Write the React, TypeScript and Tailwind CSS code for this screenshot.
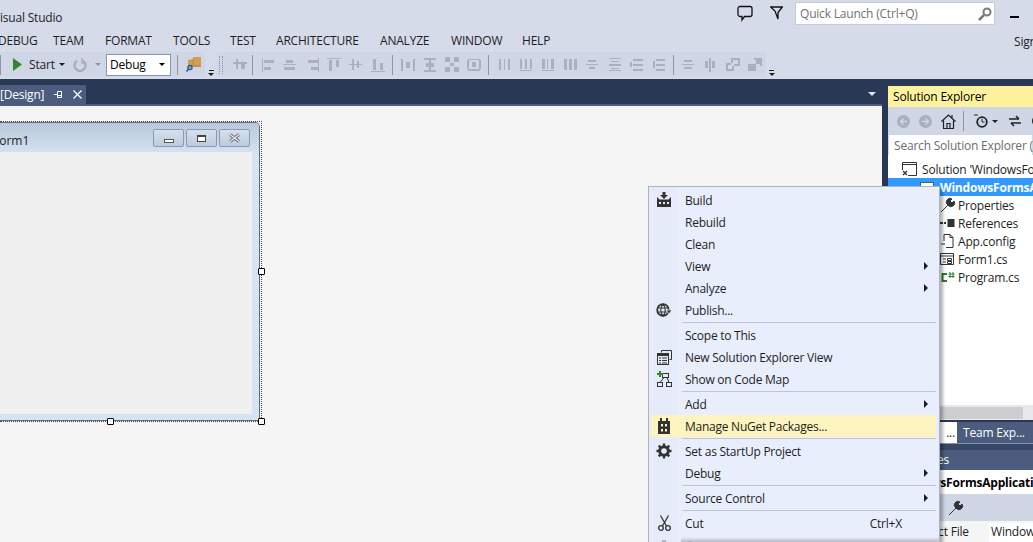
const menus = [
  { label: 'DEBUG', cls: 'w-[55px] -ml-[2px]' },
  { label: 'TEAM', cls: 'w-[52px]' },
  { label: 'FORMAT', cls: 'w-[68px]' },
  { label: 'TOOLS', cls: 'w-[57px]' },
  { label: 'TEST', cls: 'w-[46px]' },
  { label: 'ARCHITECTURE', cls: 'w-[104px]' },
  { label: 'ANALYZE', cls: 'w-[71px]' },
  { label: 'WINDOW', cls: 'w-[71px]' },
  { label: 'HELP', cls: 'w-[492px]' },
]

type Box = [number, number, number, number]

// designer alignment buttons, all greyed out
const alignGroups: Box[][][] = [
  [
    [[1, 1, 1, 14], [3, 3, 10, 3], [3, 10, 7, 3]],
    [[0, 7, 13, 1], [3, 3, 7, 3], [1, 10, 11, 3]],
    [[13, 1, 1, 14], [3, 3, 10, 3], [6, 10, 7, 3]],
    [[0, 1, 14, 1], [2, 3, 3, 11], [9, 3, 3, 7]],
    [[0, 7, 13, 1], [3, 2, 2, 11], [8, 4, 2, 7]],
    [[0, 14, 14, 1], [2, 2, 3, 11], [9, 6, 3, 7]],
  ],
  [
    [[0, 2, 2, 12], [12, 2, 2, 12], [5, 5, 4, 6]],
    [[1, 1, 12, 2], [1, 13, 12, 2], [6, 3, 2, 10], [3, 6, 8, 4]],
    [[0, 0, 5, 5], [9, 0, 5, 5], [0, 10, 5, 5], [9, 10, 5, 5], [5, 6, 4, 3]],
    [[1, 2, 12, 1], [0, 3, 2, 9], [12, 3, 2, 9], [1, 12, 12, 2], [5, 5, 4, 5]],
  ],
  [
    [[1, 2, 2, 11], [6, 2, 1, 11], [10, 2, 2, 11]],
    [[0, 2, 2, 10], [5, 2, 2, 10], [10, 2, 2, 10], [0, 13, 12, 1]],
    [[0, 2, 3, 10], [5, 2, 1, 10], [9, 2, 3, 10], [0, 13, 12, 1]],
    [[0, 2, 3, 11], [5, 2, 3, 11], [10, 2, 3, 11]],
    [[0, 7, 12, 1], [2, 3, 8, 2], [3, 10, 6, 2]],
    [[1, 1, 12, 1], [1, 7, 12, 2], [1, 13, 12, 1], [3, 4, 8, 1], [3, 11, 8, 1]],
    [[3, 2, 10, 2], [3, 7, 10, 2], [3, 12, 10, 2], [0, 5, 2, 5]],
    [[4, 2, 9, 2], [4, 7, 9, 2], [4, 12, 9, 2], [1, 4, 2, 7]],
  ],
  [
    [[0, 7, 12, 1], [2, 3, 8, 2], [2, 10, 8, 2]],
    [[5, 1, 2, 14], [1, 4, 3, 7], [8, 4, 3, 7]],
    [[0, 6, 2, 8], [0, 12, 8, 2], [6, 9, 2, 5], [0, 6, 5, 2], [5, 1, 9, 2], [12, 1, 2, 8], [5, 1, 2, 5], [8, 7, 6, 2]],
    [[0, 7, 8, 7], [6, 1, 8, 2], [12, 1, 2, 8], [8, 3, 4, 4]],
  ],
]

function AlignIcon({ boxes }: { boxes: Box[] }) {
  return (
    <div className="w-[22px] flex items-center justify-center">
      <svg width="14" height="16" viewBox="0 0 14 16" fill="#aab0bd">
        {boxes.map((b, i) => (
          <rect key={i} x={b[0]} y={b[1]} width={b[2]} height={b[3]} />
        ))}
      </svg>
    </div>
  )
}

function Caret({ className }: { className: string }) {
  return <div className={`w-0 h-0 border-x-[3px] border-x-transparent border-t-[3px] ${className}`} />
}

function Overflow() {
  return (
    <div className="flex flex-col items-center gap-[2px]">
      <div className="w-[5px] h-px bg-[#1e1e1e]" />
      <Caret className="border-t-[#1e1e1e]" />
    </div>
  )
}

function BuildIcon() {
  return (
    <svg width="16" height="16" viewBox="0 0 16 16" fill="#333">
      <path d="M6.500 0h3v3h2.500L8 7 4 3h2.500z" />
      <path d="M1 5l2.500 2.500h9L15 5v10H1zM3 10v2h2v-2zm4 0v2h2v-2zm4 0v2h2v-2z" fillRule="evenodd" />
    </svg>
  )
}

function GlobeIcon() {
  return (
    <svg width="16" height="16" viewBox="0 0 16 16" fill="none" stroke="#333" strokeWidth="1.800">
      <circle cx="7" cy="8" r="5.800" />
      <path d="M1.500 6h11M1.500 10h11M7 2c-3 3-3 9 0 12M7 2c3 3 3 9 0 12" strokeWidth="1.100" />
      <path d="M10 8h6l-3 4z" fill="#333" stroke="#e5ebf9" strokeWidth="0.800" />
    </svg>
  )
}

function NewViewIcon() {
  return (
    <svg width="15" height="15" viewBox="0 0 15 15" fill="none" stroke="#333">
      <path d="M4.500 2.500V.5h10v9h-2" />
      <rect x="0.500" y="3.500" width="11" height="11" fill="#e5ebf9" />
      <path d="M0.500 5h11" strokeWidth="2" />
      <path d="M2 8h2M5 8h5M2 10.500h2M5 10.500h5M2 13h2M5 13h5" />
    </svg>
  )
}

function CodeMapIcon() {
  return (
    <svg width="15" height="16" viewBox="0 0 15 16" fill="none" stroke="#333">
      <rect x="5.500" y="2.500" width="6" height="4" />
      <rect x="0.500" y="11.500" width="5" height="4" />
      <rect x="9.500" y="11.500" width="5" height="4" />
      <path d="M7 6.500l-4 5M10 6.500l2 5" />
      <path d="M3 0v6M0 3h6" stroke="#2f8a2f" strokeWidth="2" />
    </svg>
  )
}

function NugetIcon() {
  return (
    <svg width="12" height="16" viewBox="0 0 12 16" fill="#333">
      <path d="M2 0h2v3h4V0h2v3h2v13H0V3h2zM3 6v2.500h2V6zm4 0v2.500h2V6zm-4 5v2.500h2V11zm4 0v2.500h2V11z" fillRule="evenodd" />
    </svg>
  )
}

function GearIcon() {
  return (
    <svg width="16" height="16" viewBox="0 0 16 16" fill="none" stroke="#333">
      <circle cx="8" cy="8" r="4.300" strokeWidth="3" />
      <path d="M8 0.500v3M8 12.500v3M0.500 8h3M12.500 8h3M2.700 2.700l2.100 2.100M11.200 11.200l2.100 2.100M2.700 13.300l2.100-2.100M11.200 4.800l2.100-2.100" strokeWidth="2.400" />
    </svg>
  )
}

function CutIcon() {
  return (
    <svg width="13" height="16" viewBox="0 0 13 16" fill="none" stroke="#333" strokeWidth="1.300">
      <path d="M2.500 0.500l6 10.500M10.500 0.500l-6 10.500" />
      <circle cx="3" cy="13" r="2.300" />
      <circle cx="10" cy="13" r="2.300" />
    </svg>
  )
}

function CopyIcon() {
  return (
    <svg width="14" height="10" viewBox="0 0 14 10" fill="#b4b9c6">
      <path d="M5 0h4v2h2v8H3V2h2z" />
    </svg>
  )
}

function WrenchIcon() {
  return (
    <svg width="16" height="16" viewBox="0 0 16 16" fill="#333" stroke="#333">
      <path d="M1 15l7-7a3.500 3.500 0 0 1 4-6l-2 2 2 2 2-2a3.500 3.500 0 0 1-6 4" />
    </svg>
  )
}

function MenuRow({ label, icon, sub, hot, shortcut }: { label: string; icon?: React.ReactNode; sub?: boolean; hot?: boolean; shortcut?: string }) {
  return (
    <div className={`h-[22px] flex items-center mx-[2px] mr-[3px] ${hot ? 'bg-[#fdf4bf]' : ''}`}>
      <div className="w-[28px] flex justify-center items-center pr-[2px]">{icon}</div>
      <div className="pl-[6px] pt-[1px] flex-1 text-[#1e1e1e] whitespace-nowrap tracking-[-0.25px]">{label}</div>
      {shortcut && <div className="mr-[34px] pt-[1px] text-[#1e1e1e]">{shortcut}</div>}
      {sub && <div className="mr-[8px] w-0 h-0 border-y-[4px] border-y-transparent border-l-[4px] border-l-[#1e1e1e]" />}
    </div>
  )
}

function MenuSep() {
  return <div className="h-[3px] flex items-center ml-[33px] mr-[3px]"><div className="h-px w-full bg-[#bdc4d5]" /></div>
}

function WinButton({ children }: { children: React.ReactNode }) {
  return (
    <div className="w-[31px] h-[18px] rounded-[2px] border border-[#8a9ab3] bg-[linear-gradient(to_bottom,#d5e0ec,#bccbdc)] flex items-center justify-center">
      {children}
    </div>
  )
}

function Handle({ className }: { className: string }) {
  return <div className={`absolute w-[7px] h-[7px] rounded-[1px] bg-white border border-black ${className}`} />
}

function TreeRow({ icon, label, cls, iconCls }: { icon: React.ReactNode; label: string; cls: string; iconCls: string }) {
  return (
    <div className={`h-[18px] flex items-center whitespace-nowrap ${cls}`}>
      <div className={`shrink-0 flex items-center ${iconCls}`}>{icon}</div>
      <span className="pt-[1px]">{label}</span>
    </div>
  )
}

function NavCircle({ dir, cls }: { dir: 'l' | 'r'; cls: string }) {
  return (
    <svg className={`shrink-0 ${cls}`} width="13" height="13" viewBox="0 0 13 13">
      <circle cx="6.500" cy="6.500" r="6.500" fill="#a9afbc" />
      <path d={dir === 'l' ? 'M10 6.500H4M6.500 3.500l-3 3 3 3' : 'M3 6.500h6M6.500 3.500l3 3-3 3'} fill="none" stroke="#cfd6e5" strokeWidth="1.400" />
    </svg>
  )
}

export default function App() {
  return (
    <div className="relative w-[1033px] h-[542px] overflow-hidden bg-[#d6dbe9] text-[12px] leading-none text-[#1e1e1e] font-['Open_Sans','Noto_Sans',sans-serif] tracking-[-0.2px]">
      {/* title bar */}
      <div className="h-[30px] flex">
        <div className="-ml-[7px] pt-[12px] w-[744px] whitespace-nowrap">Visual Studio</div>
        <div className="w-[33px] pt-[5px]">
          <svg width="16" height="17" viewBox="0 0 16 17" fill="none" stroke="#111" strokeWidth="1.300">
            <path d="M3 1.500h10a2 2 0 0 1 2 2v6a2 2 0 0 1-2 2H7.500L5 15v-3.500H3a2 2 0 0 1-2-2v-6a2 2 0 0 1 2-2z" />
          </svg>
        </div>
        <div className="w-[25px] pt-[6px]">
          <svg width="13" height="14" viewBox="0 0 13 14" fill="none" stroke="#111" strokeWidth="1.300">
            <path d="M0.700 1h11.600L8 6.500V13L5 5z" />
          </svg>
        </div>
        <div className="mt-[2px] w-[200px] h-[23px] bg-white border border-[#c3cadb] flex items-center justify-between pl-[4px] pr-[2px] text-[#717171]">
          <span>Quick Launch (Ctrl+Q)</span>
          <svg width="14" height="14" viewBox="0 0 14 14" fill="none" stroke="#7a7a7a" strokeWidth="2">
            <circle cx="9" cy="5" r="3.500" />
            <path d="M6 8l-5 5" strokeWidth="2.500" />
          </svg>
        </div>
        <div className="ml-[15px] mt-[16px] w-[9px] h-[2px] bg-black" />
      </div>

      {/* menu bar */}
      <div className="h-[22px] flex items-center whitespace-nowrap overflow-hidden">
        {menus.map((m) => (
          <div key={m.label} className={`shrink-0 ${m.cls}`}>{m.label}</div>
        ))}
        <div className="shrink-0 pt-[2px]">Sign in</div>
      </div>

      {/* toolbars */}
      <div className="h-[25px] flex">
        <div className="w-[205px] shrink-0 bg-[#cfd6e5] flex items-center">
          <div className="w-px h-[20px] bg-[#8d95a6]" />
          <svg className="ml-[12px]" width="9" height="13" viewBox="0 0 9 13" fill="#36862f">
            <path d="M0 0l9 6.500L0 13z" />
          </svg>
          <span className="ml-[7px] w-[30px]">Start</span>
          <Caret className="border-t-[#1e1e1e]" />
          <svg className="ml-[8px]" width="14" height="14" viewBox="0 0 14 14" fill="none" stroke="#a9afbc" strokeWidth="2.400">
            <path d="M10 2.800A5.500 5.500 0 1 1 4 2.800" />
            <path d="M9 0v5h4" strokeWidth="1.500" />
          </svg>
          <Caret className="ml-[8px] border-t-[#8d95a6]" />
          <div className="ml-[5px] w-[65px] h-[22px] bg-white border border-[#8d95a6] flex items-center justify-between pl-[3px] pr-[5px] text-black">
            <span>Debug</span>
            <Caret className="border-t-black" />
          </div>
          <div className="ml-[6px] w-px h-[20px] bg-[#8d95a6]" />
          <svg className="ml-[8px]" width="15" height="15" viewBox="0 0 15 15">
            <path d="M2 3l5-1V0h8v10H5v1H2z" fill="#d39b58" />
            <path d="M7 2v7h8" stroke="#b98344" fill="none" />
            <circle cx="4" cy="10.500" r="2" fill="none" stroke="#1f5e9c" strokeWidth="1.400" />
            <path d="M2.500 12l-2 2.500" stroke="#1f5e9c" strokeWidth="1.600" />
          </svg>
        </div>
        <div className="w-[12px] shrink-0 flex justify-center items-end pb-[1px]"><Overflow /></div>
        <div className="w-[549px] shrink-0 bg-[#cfd6e5] flex items-center">
          <div className="ml-[2px] w-[4px] h-[18px] border-x border-dotted border-[#8d95a6]" />
          <div className="ml-[6px]">
            <AlignIcon boxes={[[0, 5, 14, 2], [3, 2, 2, 10], [8, 7, 4, 5]]} />
          </div>
          {alignGroups.map((group, g) => (
            <div key={g} className="flex items-center">
              <div className={`w-px h-[20px] bg-[#8d95a6] ml-[1px] ${g === 2 ? 'mr-[5px]' : 'mr-[4px]'} ${g > 0 ? 'ml-[3px]' : ''}`} />
              {group.map((b, i) => <AlignIcon key={i} boxes={b} />)}
            </div>
          ))}
        </div>
        <div className="w-[11px] shrink-0 flex justify-center items-end pb-[1px]"><Overflow /></div>
      </div>
      <div className="h-[2px]" />

      {/* workspace */}
      <div className="h-[463px] flex bg-[#293955]">
        <div className="w-[882px] shrink-0 flex flex-col">
          <div className="h-[25px] flex items-end justify-between shrink-0 pr-[6px]">
            <div className="w-[86px] h-[19px] bg-[#4b5c7e] text-white flex items-center whitespace-nowrap">
              <span className="w-[53px] pt-[1px]">[Design]</span>
              <svg width="9" height="9" viewBox="0 0 9 9" fill="none" stroke="#fff" className="ml-[1px]">
                <path d="M0 4.500h3M3.500 1.500v6h4v-6zM3.500 5.500h4" />
              </svg>
              <svg width="9" height="9" viewBox="0 0 9 9" fill="none" stroke="#fff" strokeWidth="1.300" className="ml-[10px]">
                <path d="M0.500 0.500l8 8M8.500 0.500l-8 8" />
              </svg>
            </div>
            <Caret className="mb-[8px] border-x-[4px] border-t-[4px] border-t-[#dfe3ec]" />
          </div>
          <div className="h-[2px] bg-[#4b5c7e] shrink-0" />
          <div className="flex-1 bg-[#f5f5f5] pt-[15px]">
            <div className="relative w-[262px] h-[301px] border-t border-r border-b border-dotted border-[#444]">
              <div className="w-[260px] h-[299px] border-t border-r border-b border-[#5f6b80] rounded-tr-[5px] overflow-hidden bg-[#d6e4f2] flex flex-col">
                <div className="h-[29px] shrink-0 bg-[linear-gradient(to_bottom,#b9c9da,#d3e1f0)] flex items-center pr-[9px]">
                  <span className="-ml-[7px] mt-[7px] flex-1 text-[#222] tracking-normal">Form1</span>
                  <div className="flex gap-[2px] mt-[1px]">
                    <WinButton><div className="w-[10px] h-[4px] mt-[5px] border border-[#555] bg-white" /></WinButton>
                    <WinButton><div className="w-[9px] h-[7px] border border-[#444] border-t-2 bg-white" /></WinButton>
                    <WinButton>
                      <svg width="13" height="10" viewBox="0 0 13 10">
                        <path d="M2 1.500l9 7M11 1.500l-9 7" stroke="#667" strokeWidth="3" />
                        <path d="M2 1.500l9 7M11 1.500l-9 7" stroke="#eef1f5" strokeWidth="1.200" />
                      </svg>
                    </WinButton>
                  </div>
                </div>
                <div className="w-[252px] h-[262px] bg-[#f0f0f0]" />
              </div>
              <Handle className="-right-[4px] top-[146px]" />
              <Handle className="left-[107px] -bottom-[4px]" />
              <Handle className="-right-[4px] -bottom-[4px]" />
            </div>
          </div>
        </div>

        {/* solution explorer */}
        <div className="ml-[6px] mt-[7px] flex-1 min-w-0 flex flex-col overflow-hidden">
          <div className="h-[21px] shrink-0 bg-[#fff29d] flex items-center pl-[5px] whitespace-nowrap text-black">Solution Explorer</div>
          <div className="h-[28px] shrink-0 bg-[#cfd6e5] flex items-center pl-[9px]">
            <NavCircle dir="l" cls="" />
            <NavCircle dir="r" cls="ml-[9px]" />
            <svg className="ml-[9px] shrink-0" width="15" height="15" viewBox="0 0 15 15" fill="none" stroke="#222" strokeWidth="1.200">
              <path d="M0.500 7.500L7.500 1l7 6.500M2.500 6.500v8h10v-8M6 14.500v-5h3v5M11 1v3" />
            </svg>
            <div className="ml-[7px] w-px h-[20px] bg-[#8d95a6] shrink-0" />
            <svg className="ml-[10px] shrink-0" width="14" height="14" viewBox="0 0 14 14" fill="none" stroke="#222">
              <circle cx="8" cy="8" r="4.800" strokeWidth="1.800" />
              <path d="M8 5v3h2.500M0 1h4" />
            </svg>
            <Caret className="ml-[4px] shrink-0 border-t-[#222]" />
            <svg className="ml-[11px] shrink-0" width="12" height="12" viewBox="0 0 12 12" fill="none" stroke="#222" strokeWidth="1.500">
              <path d="M0 4h10M7 1l3 3M12 8H2M5 11L2 8" />
            </svg>
            <svg className="ml-[10px] shrink-0" width="14" height="14" viewBox="0 0 14 14" fill="none" stroke="#222" strokeWidth="2">
              <circle cx="7" cy="7" r="5" />
            </svg>
          </div>
          <div className="h-[20px] shrink-0 bg-white border-x border-[#cfd6e5] flex items-center pl-[5px] pt-[1px] text-[#6d6d6d] whitespace-nowrap">Search Solution Explorer (Ctrl+;)</div>
          <div className="h-[250px] shrink-0 bg-white pt-[5px] text-[#1e1e1e]">
            <TreeRow
              cls="pl-[14px]"
              iconCls="w-[20px]"
              label="Solution 'WindowsFormsApplication1'"
              icon={
                <svg width="15" height="14" viewBox="0 0 15 14" fill="none" stroke="#333">
                  <path d="M0.500 0.500h14v13H6M0.500 0.500V8M0.500 2.500h14" />
                  <path d="M1 9l4 4M5 9l-4 4" strokeWidth="1.300" />
                </svg>
              }
            />
            <TreeRow
              cls="pl-[32px] bg-[#3399ff] text-white font-bold"
              iconCls="w-[20px]"
              label="WindowsFormsApplication1"
              icon={<div className="w-[14px] h-[11px] border border-[#2f7a2f] bg-white" />}
            />
            {['Properties', 'References', 'App.config', 'Form1.cs', 'Program.cs'].map((name, i) => (
              <TreeRow
                key={name}
                cls="pl-[52px]"
                iconCls="w-[18px]"
                label={name}
                icon={
                  <svg width="16" height="16" viewBox="0 0 16 16" fill="none" stroke="#333">
                    {i === 0 && <path d="M1 15l7-7a3.500 3.500 0 0 1 4-6l-2 2 2 2 2-2a3.500 3.500 0 0 1-6 4" fill="#333" />}
                    {i === 1 && <path d="M0 8h3M4 8h2" strokeWidth="2" />}
                    {i === 1 && <rect x="8" y="4.500" width="6" height="7" fill="#333" />}
                    {i === 2 && <path d="M4 8V1.500h6l3 3v10H6M10 1.500v3h3M1 11h4" />}
                    {i === 3 && <path d="M0.500 2.500h13v11H0.500zM0.500 5h13M3 8h3M3 11h3M7.500 7.500h4v2h-4zM7.500 10.500h4v2h-4z" />}
                    {i === 4 && <path d="M7 5H2.500v7H7" stroke="#2f7a2f" strokeWidth="2" />}
                    {i === 4 && <path d="M10 3v6M13 3v6M8.500 5h6M8.500 7.500h6" stroke="#2f7a2f" />}
                  </svg>
                }
              />
            ))}
          </div>
          <div className="h-[15px] shrink-0 bg-[#e8e8ec] flex items-center"><div className="w-[135px] h-[12px] bg-[#cdcdd2]" /></div>
          <div className="h-[21px] mt-[2px] shrink-0 flex bg-white">
            <div className="w-[69px] shrink-0 flex items-center justify-end pr-[2px]">...</div>
            <div className="flex-1 bg-[#4b5c7e] text-white flex items-center pl-[6px] pt-[1px] whitespace-nowrap overflow-hidden">Team Exp...</div>
          </div>
          <div className="h-[7px] shrink-0 bg-[#364866] border-t border-[#8393ad]" />
          <div className="h-[20px] shrink-0 bg-[#4b5c7e] text-white flex items-center pl-[5px]">Properties</div>
          <div className="h-[24px] shrink-0 bg-white font-bold text-black flex items-center pl-[5px] pt-[2px] whitespace-nowrap">WindowsFormsApplication1</div>
          <div className="h-[27px] shrink-0 bg-[#cfd6e5] flex items-center pl-[60px]">
            <WrenchIcon />
          </div>
          <div className="flex-1 bg-[#f5f5f5] flex whitespace-nowrap pt-[2px]">
            <div className="w-[101px] shrink-0 pl-[22px] pt-[3px]">Project File</div>
            <div className="flex-1 bg-white pl-[2px] pt-[3px]">Windows</div>
          </div>
        </div>
      </div>

      {/* context menu */}
      <div className="absolute left-[648px] top-[186px] w-[292px] h-[360px] border border-[#a9b2c6] bg-[linear-gradient(to_right,#e5ebf9_28px,#e9eefd_28px)] shadow-[3px_3px_3px_rgba(0,0,0,0.3)] pt-[2px] overflow-hidden">
        <MenuRow label="Build" icon={<BuildIcon />} />
        <MenuRow label="Rebuild" />
        <MenuRow label="Clean" />
        <MenuRow label="View" sub />
        <MenuRow label="Analyze" sub />
        <MenuRow label="Publish..." icon={<GlobeIcon />} />
        <MenuSep />
        <MenuRow label="Scope to This" />
        <MenuRow label="New Solution Explorer View" icon={<NewViewIcon />} />
        <MenuRow label="Show on Code Map" icon={<CodeMapIcon />} />
        <MenuSep />
        <MenuRow label="Add" sub />
        <MenuRow label="Manage NuGet Packages..." icon={<NugetIcon />} hot />
        <MenuSep />
        <MenuRow label="Set as StartUp Project" icon={<GearIcon />} />
        <MenuRow label="Debug" sub />
        <MenuSep />
        <MenuRow label="Source Control" sub />
        <MenuSep />
        <MenuRow label="Cut" icon={<CutIcon />} shortcut="Ctrl+X" />
        <MenuRow label="Copy" icon={<CopyIcon />} />
      </div>
      <div className="absolute left-[681px] top-[537px] w-[259px] h-[5px] bg-[linear-gradient(to_bottom,transparent,#b9bcc6)]" />
    </div>
  )
}
